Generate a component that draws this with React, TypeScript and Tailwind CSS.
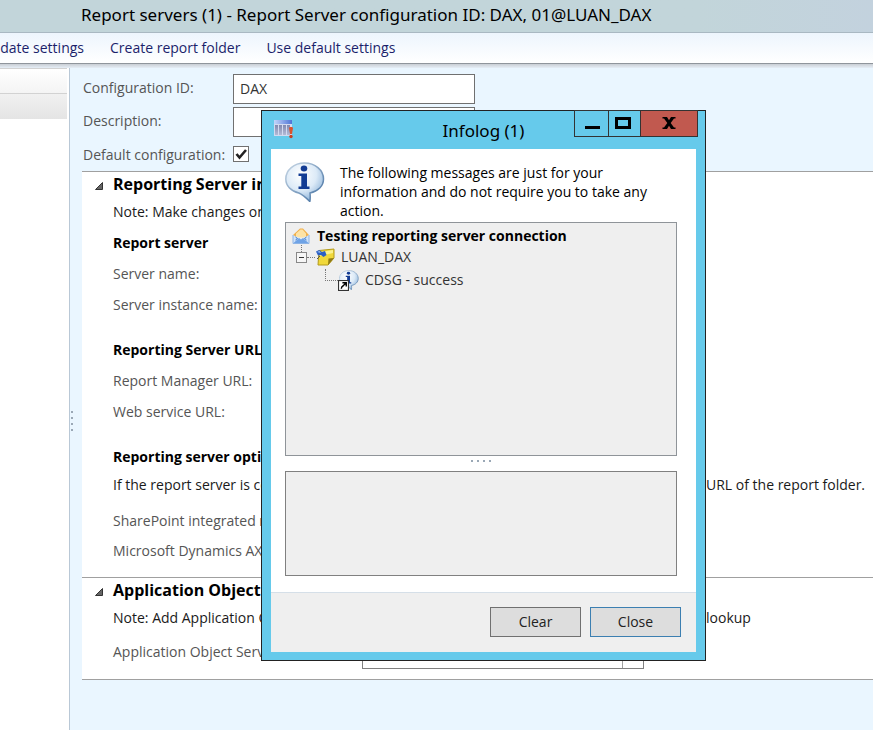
import type { ReactNode } from "react";

function CalendarAlertIcon() {
  return (
    <svg viewBox="0 0 20 20" className="h-5 w-5" aria-hidden="true">
      <defs>
        <linearGradient id="cal-head" x1="0" x2="1">
          <stop offset="0" stopColor="#c3d6fb" />
          <stop offset="1" stopColor="#4f74d6" />
        </linearGradient>
        <linearGradient id="cal-col" x1="0" x2="0" y1="0" y2="1">
          <stop offset="0" stopColor="#8189b0" />
          <stop offset="1" stopColor="#b4bad6" />
        </linearGradient>
      </defs>
      <rect x="0" y="0" width="18" height="16" fill="#d3daf0" />
      <rect x="0" y="0" width="18" height="4" fill="url(#cal-head)" />
      <g fill="url(#cal-col)">
        <rect x="1" y="5" width="3" height="10" />
        <rect x="5" y="5" width="3" height="10" />
        <rect x="9" y="5" width="3" height="10" />
        <rect x="13" y="5" width="3" height="10" />
      </g>
      <path d="M15 8c0-1.400 4-1.400 4 0l-1 6h-2z" fill="#d9532c" />
      <circle cx="17" cy="16.500" r="1.700" fill="#c9401f" />
    </svg>
  );
}

function InfoBubble({ className }: { className: string }) {
  return (
    <svg viewBox="0 0 40 40" className={className} aria-hidden="true">
      <defs>
        <radialGradient id="bubble" cx="0.4" cy="0.3" r="0.75">
          <stop offset="0" stopColor="#ffffff" />
          <stop offset="0.55" stopColor="#dceaf7" />
          <stop offset="1" stopColor="#86aed6" />
        </radialGradient>
        <linearGradient id="rim" x1="0" y1="0" x2="1" y2="1">
          <stop offset="0" stopColor="#c9d8e6" />
          <stop offset="1" stopColor="#3f6d9f" />
        </linearGradient>
      </defs>
      <path
        d="M19.500 1C9 1 .8 8 .8 17c0 7 5.500 12.500 13 14 4 1.500 6.500 4 11 8.500 .6-3 .5-5.500 .2-8.500C33 29.500 38.500 24 38.500 17 38.500 8 30 1 19.500 1z"
        fill="url(#bubble)"
        stroke="url(#rim)"
        strokeWidth="1.500"
      />
      <ellipse cx="19" cy="6.500" rx="3.300" ry="2.900" fill="#123c94" />
      <path d="M13.500 11.500h8.500v13h2.500v2.500H13.500v-2.500h2.800V14h-2.800z" fill="#123c94" />
    </svg>
  );
}

function EnvelopeIcon() {
  return (
    <svg viewBox="0 0 18 18" className="h-[18px] w-[18px]" aria-hidden="true">
      <path d="M1 8L8 1.500h3L17 8v2H1z" fill="#f2b04a" />
      <path d="M4 6.500L8.500 2.500h2L14 6.500v4H4z" fill="#fde3a6" />
      <path d="M1 8l8 4 8-4v8.500H1z" fill="#cfe3fa" />
      <path d="M1 16.500L7 11l2 1.500L11 11l6 5.500z" fill="#6fa3e6" />
      <path d="M1 8v8.500h16V8" fill="none" stroke="#8db4e6" />
      <path d="M3.500 10l2 1.500-2 1.500M14.500 10l-2 1.500 2 1.500" fill="none" stroke="#4a7fc9" />
    </svg>
  );
}

function PinnedNoteIcon() {
  return (
    <svg viewBox="0 0 20 18" className="h-[18px] w-5" aria-hidden="true">
      <path d="M4 2.500L19 1v9l-6 7H3z" fill="#f0d83a" stroke="#b39a1c" />
      <path d="M5 4l13-2v3L5 8z" fill="#fbf18e" />
      <path d="M19 10l-5.500 .5L13 17z" fill="#8f7a14" />
      <path d="M1 3.500l3-1.500 3 2 3-1 1.500 4-3 2-2.500-2-3 .5z" fill="#2b5fc4" />
      <path d="M2 4l2.500-1 1.500 2z" fill="#9cc2f7" />
      <path d="M5 8l-3 3" stroke="#555" />
    </svg>
  );
}

function ShortcutInfoIcon() {
  return (
    <span className="relative block h-[21px] w-[21px]">
      <InfoBubble className="absolute top-0 right-0 h-5 w-5" />
      <svg viewBox="0 0 10 10" className="absolute bottom-0 left-0 h-[11px] w-[11px]" aria-hidden="true">
        <rect x="0.500" y="0.500" width="9" height="9" fill="#fff" stroke="#333" />
        <path d="M4 2.500h3.500V6M7.500 2.500L5 5Q3 6 3 8" fill="none" stroke="#000" strokeWidth="1.300" />
      </svg>
    </span>
  );
}

function Section({ title, children }: { title: string; children: ReactNode }) {
  return (
    <section className="border-t border-[#a0a0a0] bg-white pt-[2px] pb-4 pl-[31px] leading-5">
      <h2 className="-ml-[18px] flex items-center text-base leading-5 font-bold text-black">
        <svg viewBox="0 0 8 8" className="mt-1 mr-[10px] h-2 w-2" aria-hidden="true">
          <path d="M7.500 .5v7h-7z" fill="#666" stroke="#333" />
        </svg>
        {title}
      </h2>
      {children}
    </section>
  );
}

function Note({ start, end }: { start: string; end?: string }) {
  return (
    <p className="mt-2 flex whitespace-nowrap text-[#1a1a1a]">
      <span className="w-[593px] shrink-0">{start}</span>
      {end && <span>{end}</span>}
    </p>
  );
}

function Group({ title, children }: { title: string; children: ReactNode }) {
  return (
    <>
      <h3 className="font-bold text-black">{title}</h3>
      {children}
    </>
  );
}

function Grip({ vertical }: { vertical?: boolean }) {
  return (
    <span className={vertical ? "flex flex-col gap-1" : "flex gap-1"}>
      {[0, 1, 2, 3].map((n) => (
        <i key={n} className="h-[2px] w-[2px] bg-[#9aa8b6]" />
      ))}
    </span>
  );
}

function Infolog() {
  return (
    <div
      role="dialog"
      aria-labelledby="infolog-title"
      className="absolute top-[110px] left-[261px] w-[445px] border border-[#222] bg-[#66caeb] px-[9px] pb-2"
    >
      <header className="relative flex h-[38px] items-center">
        <span className="ml-[3px]">
          <CalendarAlertIcon />
        </span>
        <h1
          id="infolog-title"
          className="absolute inset-x-0 top-2 text-center font-['Noto_Sans',sans-serif] text-[17px] leading-6 text-black"
        >
          Infolog (1)
        </h1>
        <div className="absolute -top-px -right-[2px] flex h-[27px] divide-x divide-[#333] border border-[#333]">
          <button aria-label="Minimize" className="flex w-[34px] items-end justify-center pb-[7px] pl-[2px]">
            <i className="h-[3px] w-[15px] bg-black" />
          </button>
          <button aria-label="Maximize" className="flex w-8 items-center justify-center pr-1 pb-[2px]">
            <i className="h-3 w-4 border-3 border-black" />
          </button>
          <button aria-label="Close window" className="flex w-14 items-center justify-center bg-[#c1594f] pb-[2px]">
            <svg viewBox="0 0 14 12" className="h-3 w-[14px]">
              <path d="M.5 0h4.500L7 3.300 9 0h4.500v1.500H12L8.700 6l3.300 4.500h1.500V12H9L7 8.700 5 12H.5v-1.500H2L5.300 6 2 1.500H.5z" fill="#000" />
            </svg>
          </button>
        </div>
      </header>

      <div className="bg-white">
        <div className="flex px-[14px] pt-[13px]">
          <InfoBubble className="h-10 w-10 shrink-0" />
          <p className="ml-[15px] w-[330px] pt-px leading-[19px] text-black">
            The following messages are just for your information and do not require you to take any action.
          </p>
        </div>

        <div className="mt-[2px] mr-[19px] ml-[14px] h-[234px] border border-[#8f9499] bg-[#efefef] pt-1 pl-[6px] text-[#333]">
          <div className="flex h-[18px] items-center font-bold text-black">
            <EnvelopeIcon />
            <span className="ml-[7px]">Testing reporting server connection</span>
          </div>
          <div className="flex h-6 items-center">
            <span className="flex h-full w-[10px] items-start justify-end">
              <i className="h-[7px] border-l border-dotted border-[#777]" />
            </span>
            <span className="-ml-[6px] flex h-[11px] w-[11px] items-center justify-center border border-[#888] bg-[#f6f6f6]">
              <i className="h-px w-[5px] bg-[#333]" />
            </span>
            <i className="w-2 border-t border-dotted border-[#777]" />
            <PinnedNoteIcon />
            <span className="ml-[6px]">LUAN_DAX</span>
          </div>
          <div className="flex h-[22px] items-center pl-[33px]">
            <i className="mb-[10px] h-3 w-[13px] border-b border-l border-dotted border-[#777]" />
            <ShortcutInfoIcon />
            <span className="ml-[6px]">CDSG - success</span>
          </div>
        </div>

        <div className="mr-[5px] flex h-[15px] items-start justify-center pt-1">
          <Grip />
        </div>

        <div className="mr-[19px] ml-[14px] h-[105px] border border-[#808080] bg-[#efefef]" />

        <footer className="mt-4 flex justify-end gap-[9px] border-t border-[#d5dfe8] bg-[#efefef] pt-[14px] pr-[15px] pb-[15px]">
          <button className="h-[30px] w-[91px] border border-[#707070] bg-[#dddddd] text-[#222]">Clear</button>
          <button className="h-[30px] w-[91px] border border-[#3c7fb1] bg-[#dddddd] text-[#222]">Close</button>
        </footer>
      </div>
    </div>
  );
}

export default function App() {
  return (
    <div className="relative flex min-h-screen flex-col overflow-hidden bg-[#eaf6ff] font-['Open_Sans','Noto_Sans',sans-serif] text-sm">
      <header className="h-[33px] border-b border-[#a9b8c2] bg-linear-to-r from-[#c2d5da] from-80% to-[#c3d2de] pl-[81px] font-['Noto_Sans',sans-serif] text-[17px] leading-[30px] whitespace-nowrap text-black">
        Report servers (1) - Report Server configuration ID: DAX, 01@LUAN_DAX
      </header>

      <nav className="flex h-[31px] items-center gap-[26px] border-b border-[#8f959c] bg-linear-to-b from-[#edf5fd] to-white whitespace-nowrap text-[#1b1f6b]">
        <button className="flex w-[84px] justify-end overflow-hidden">Validate settings</button>
        <button>Create report folder</button>
        <button>Use default settings</button>
      </nav>
      <div className="h-1 bg-linear-to-b from-[#c9ced4] to-[#e6eef6]" />

      <div className="flex grow">
        <aside className="w-[70px] shrink-0 border-r border-[#b9c8d6] bg-white pr-[2px]">
          <div className="h-[26px] border-y border-[#d2d2d2] bg-linear-to-b from-white to-[#f4f4f4]" />
          <div className="h-[25px] bg-linear-to-b from-[#f1f1f1] to-[#e4e4e4]" />
        </aside>

        <main className="min-w-0 grow">
          <div className="flex h-full">
            <div className="flex w-[12px] shrink-0 items-start pt-[343px] pl-px">
              <Grip vertical />
            </div>
            <div className="min-w-0 grow">
              <form className="grid grid-cols-[150px_242px] gap-y-[3px] pt-[6px] pl-px text-[#555]">
                <label htmlFor="config-id" className="leading-7">
                  Configuration ID:
                </label>
                <input
                  id="config-id"
                  defaultValue="DAX"
                  className="h-[30px] border border-[#707070] bg-white px-[6px] pb-[2px] text-[#333]"
                />
                <label htmlFor="description" className="leading-[27px]">
                  Description:
                </label>
                <input id="description" className="h-[30px] border border-[#707070] bg-white px-[6px]" />
                <label htmlFor="default-config" className="leading-[29px]">
                  Default configuration:
                </label>
                <span className="relative mt-[6px] h-[25px]">
                  <input
                    id="default-config"
                    type="checkbox"
                    defaultChecked
                    className="peer block h-4 w-4 appearance-none border border-[#707070] bg-white"
                  />
                  <svg
                    viewBox="0 0 16 16"
                    className="pointer-events-none absolute top-0 left-0 hidden h-4 w-4 peer-checked:block"
                    aria-hidden="true"
                  >
                    <path d="M3.500 8l3 3.500L13 4" fill="none" stroke="#222" strokeWidth="2.600" />
                  </svg>
                </span>
              </form>

              <Section title="Reporting Server information">
                <Note start="Note: Make changes only" />
                <div className="mt-[11px] flex flex-col gap-[25px] text-[#555]">
                  <div className="flex flex-col gap-[11px]">
                    <Group title="Report server">
                      <p>Server name:</p>
                      <p>Server instance name:</p>
                    </Group>
                  </div>
                  <div className="flex flex-col gap-[11px]">
                    <Group title="Reporting Server URLs">
                      <p>Report Manager URL:</p>
                      <p>Web service URL:</p>
                    </Group>
                  </div>
                  <div>
                    <Group title="Reporting server options">
                      <Note start="If the report server is configured" end="URL of the report folder." />
                      <p className="mt-4">SharePoint integrated mode:</p>
                      <p className="mt-[10px]">Microsoft Dynamics AX report folder:</p>
                    </Group>
                  </div>
                </div>
              </Section>

              <div className="border-b border-[#a0a0a0]">
                <Section title="Application Object Server">
                  <Note start="Note: Add Application Object Server" end="lookup" />
                  <div className="-mb-[6px] mt-[11px] flex h-[30px] text-[#555]">
                    <label htmlFor="aos" className="w-[249px] shrink-0 pt-[3px] whitespace-nowrap">
                      Application Object Server:
                    </label>
                    <div className="flex w-[282px] border border-[#808080] bg-white">
                      <select id="aos" className="grow appearance-none border-r border-[#a0a0a0] bg-white" />
                      <span className="w-5" />
                    </div>
                  </div>
                </Section>
              </div>
            </div>
          </div>
        </main>
      </div>

      <Infolog />
    </div>
  );
}
